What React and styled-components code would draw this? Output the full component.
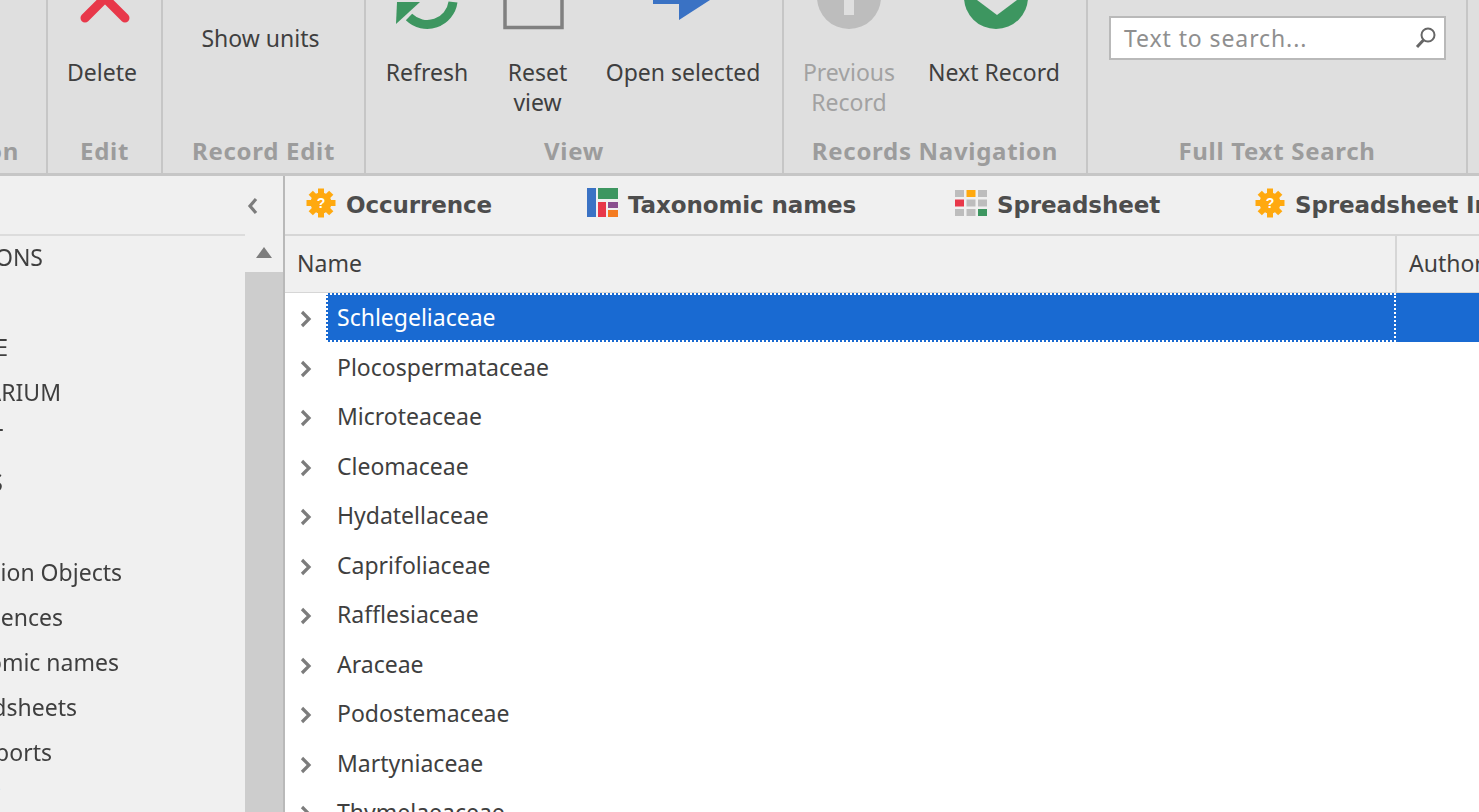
import React from "react";
import styled, { createGlobalStyle } from "styled-components";

const GlobalStyle = createGlobalStyle`
  html, body {
    margin: 0;
    height: 100%;
    overflow: hidden;
    background: #fff;
  }
`;

const Page = styled.div`
  width: 1479px;
  height: 812px;
  overflow: hidden;
  display: flex;
  flex-direction: column;
  font-family: "Noto Sans", "Liberation Sans", sans-serif;
  font-size: 23px;
  color: #3f3f3f;
  filter: blur(0.45px);
`;

const Ribbon = styled.div`
  height: 173px;
  flex: none;
  display: flex;
  background: #dfdfdf;
  border-bottom: 3px solid #c6c6c6;
`;

const Group = styled.div`
  width: ${(p) => p.$w}px;
  flex: none;
  box-sizing: border-box;
  display: flex;
  flex-direction: column;
  border-right: 2px solid #c6c6c6;
  overflow: hidden;
`;

const GroupBody = styled.div`
  height: 134px;
  display: flex;
`;

const Caption = styled.div`
  height: 36px;
  line-height: 34px;
  text-align: center;
  font-size: 24px;
  letter-spacing: 0.7px;
  font-weight: 700;
  color: #9c9c9c;
  white-space: nowrap;
`;

const ClippedCaption = styled(Caption)`
  display: flex;
  justify-content: flex-end;
  padding-right: 27px;
`;

const BarButton = styled.div`
  width: ${(p) => p.$w}px;
  flex: none;
  display: flex;
  flex-direction: column;
  align-items: center;
  text-align: center;
  line-height: 30px;
  color: ${(p) => (p.$off ? "#a2a2a2" : "#3f3f3f")};
`;

const IconSlot = styled.div`
  height: 57px;
  width: 100%;
  display: flex;
  justify-content: center;
  align-items: flex-start;
`;

const SmallButton = styled.div`
  flex: 1;
  padding: 23px 6px 0 0;
  line-height: 30px;
  text-align: center;
  white-space: nowrap;
`;

const SearchBox = styled.div`
  margin: 16px 0 0 21px;
  width: 337px;
  height: 44px;
  box-sizing: border-box;
  background: #fff;
  border: 2px solid #b9b9b9;
  display: flex;
  align-items: center;
  justify-content: space-between;
  padding: 0 5px 0 13px;
  color: #8f8f8f;
  letter-spacing: 0.9px;
`;

const Main = styled.div`
  flex: 1;
  min-height: 0;
  display: flex;
`;

const Sidebar = styled.div`
  width: 283px;
  flex: none;
  display: flex;
  background: #f0f0f0;
  border-right: 2px solid #b9b9b9;
`;

const SideColumn = styled.div`
  width: 245px;
  flex: none;
  display: flex;
  flex-direction: column;
`;

const SideHeader = styled.div`
  height: 60px;
  flex: none;
  box-sizing: border-box;
  border-bottom: 2px solid #dcdcdc;
  margin-bottom: -2px;
`;

const SideItem = styled.div`
  width: ${(p) => p.$end}px;
  height: 45px;
  flex: none;
  display: flex;
  align-items: center;
  justify-content: flex-end;
  overflow: hidden;
  white-space: nowrap;
  color: ${(p) => p.$color || "#3f3f3f"};
`;

const ScrollColumn = styled.div`
  flex: 1;
  display: flex;
  flex-direction: column;
  align-items: center;
`;

const CollapseSlot = styled.div`
  height: 60px;
  flex: none;
  width: 100%;
  display: flex;
  align-items: center;
  justify-content: flex-start;
  padding-left: 1px;
  box-sizing: border-box;
`;

const ScrollArrow = styled.div`
  height: 36px;
  flex: none;
  width: 100%;
  display: flex;
  justify-content: center;
  padding-top: 11px;
  box-sizing: border-box;
`;

const ScrollThumb = styled.div`
  flex: 1;
  width: 100%;
  background: #cdcdcd;
`;

const Content = styled.div`
  flex: 1;
  min-width: 0;
  display: flex;
  flex-direction: column;
`;

const TabBar = styled.div`
  height: 60px;
  flex: none;
  box-sizing: border-box;
  display: flex;
  align-items: center;
  padding-left: 21px;
  background: #f0f0f0;
  border-bottom: 2px solid #d6d6d6;
  white-space: nowrap;
`;

const Tab = styled.div`
  width: ${(p) => p.$w}px;
  flex: none;
  display: flex;
  align-items: center;
  gap: 10px;
  font-family: "DejaVu Sans", sans-serif;
  font-size: 23px;
  font-weight: 700;
  letter-spacing: -0.1px;
  color: #4d4d4d;

  svg {
    flex: none;
    margin-top: -5px;
  }
`;

const HeaderRow = styled.div`
  height: 56px;
  flex: none;
  display: flex;
  background: #f0f0f0;
  border-bottom: 1px solid #d6d6d6;
`;

const HeaderCell = styled.div`
  width: ${(p) => p.$w}px;
  flex: none;
  box-sizing: border-box;
  padding-left: 12px;
  line-height: 55px;
  border-right: 2px solid #d6d6d6;
  white-space: nowrap;
`;

const LastHeaderCell = styled(HeaderCell)`
  border-right: 0;
`;

const Row = styled.div`
  height: 49.5px;
  flex: none;
  display: flex;
  align-items: center;
  background: #fff;
`;

const Expander = styled.div`
  width: 41px;
  flex: none;
  display: flex;
  align-items: center;
  padding: 3px 0 0 14px;
  box-sizing: border-box;
`;

const NameCell = styled.div`
  width: 1070px;
  height: 49px;
  flex: none;
  box-sizing: border-box;
  padding-left: 11px;
  line-height: 49px;
  background: ${(p) => (p.$selected ? "#196ad2" : "transparent")};
  color: ${(p) => (p.$selected ? "#fff" : "#3f3f3f")};
  outline: ${(p) => (p.$selected ? "2px dotted #fff" : "none")};
  outline-offset: -2px;
`;

const RestCell = styled.div`
  flex: 1;
  height: 49px;
  background: ${(p) => (p.$selected ? "#196ad2" : "transparent")};
`;

const Gear = () => (
  <svg width="30" height="30" viewBox="0 0 30 30">
    {[0, 45, 90, 135, 180, 225, 270, 315].map((a) => (
      <rect key={a} x="12" y="0.5" width="6" height="8" fill="#ffa90f" transform={`rotate(${a} 15 15)`} />
    ))}
    <circle cx="15" cy="15" r="10.5" fill="#ffa90f" />
    <text x="15" y="20" textAnchor="middle" fontSize="14" fontWeight="700" fontFamily="Liberation Sans" fill="#fff">?</text>
  </svg>
);

const TaxonIcon = () => (
  <svg width="31" height="29" viewBox="0 0 31 29">
    <rect x="0" y="0" width="9" height="29" fill="#3a72c4" />
    <rect x="11" y="0" width="20" height="11" fill="#3d9660" />
    <rect x="11" y="14" width="8" height="15" fill="#e8384a" />
    <rect x="21" y="14" width="10" height="6" fill="#8a4f8f" />
    <rect x="21" y="22" width="10" height="7" fill="#f47b20" />
  </svg>
);

const gridColors = ["#bdbdbd", "#ffa90f", "#bdbdbd", "#e8384a", "#bdbdbd", "#bdbdbd", "#bdbdbd", "#bdbdbd", "#3d9660"];

const GridIcon = () => (
  <svg width="32" height="26" viewBox="0 0 32 26">
    {gridColors.map((c, i) => (
      <rect key={i} x={(i % 3) * 11.5} y={Math.floor(i / 3) * 9.5} width="9" height="7" fill={c} />
    ))}
  </svg>
);

const DeleteIcon = () => (
  <svg width="60" height="26" viewBox="0 0 60 26">
    <path d="M13 18 L33 -2 L53 18" fill="none" stroke="#e8384a" strokeWidth="9" strokeLinecap="round" />
  </svg>
);

const RefreshIcon = () => (
  <svg width="70" height="32" viewBox="0 0 70 32">
    <path d="M61 2 A26 26 0 0 1 17 17" fill="none" stroke="#3d9660" strokeWidth="9" />
    <path d="M4 24 L5 2 L28 2 Z" fill="#3d9660" />
  </svg>
);

const ResetIcon = () => (
  <svg width="70" height="32" viewBox="0 0 70 32">
    <path d="M2 -4 V27.5 H59 V-4" fill="none" stroke="#808080" strokeWidth="3.5" />
  </svg>
);

const OpenIcon = () => (
  <svg width="60" height="24" viewBox="0 0 60 24">
    <path d="M0 0 H57 L26 20 V4 H0 Z" fill="#3a72c4" />
  </svg>
);

const PrevIcon = () => (
  <svg width="66" height="32" viewBox="0 0 66 32">
    <circle cx="33" cy="-3" r="32" fill="#bdbdbd" />
    <rect x="28" y="0" width="10" height="15" fill="#dfdfdf" />
  </svg>
);

const NextIcon = () => (
  <svg width="70" height="32" viewBox="0 0 70 32">
    <circle cx="37" cy="-3" r="32" fill="#3d9660" />
    <path d="M18 0 H58 L38 15 Z" fill="#dfdfdf" />
  </svg>
);

const Loupe = () => (
  <svg width="26" height="26" viewBox="0 0 26 26">
    <circle cx="15" cy="10" r="6.5" fill="none" stroke="#666" strokeWidth="2" />
    <path d="M10.5 15 L4 22" stroke="#666" strokeWidth="3" />
  </svg>
);

const Chevron = ({ dir }) => (
  <svg width="14" height="18" viewBox="0 0 14 18">
    <path
      d={dir === "left" ? "M10 2 L4 9 L10 16" : "M3 2 L10 9 L3 16"}
      fill="none"
      stroke="#7c7c7c"
      strokeWidth="3.2"
    />
  </svg>
);

const UpArrow = () => (
  <svg width="16" height="11" viewBox="0 0 16 11">
    <path d="M8 0 L16 11 H0 Z" fill="#7d7d7d" />
  </svg>
);

const sideItems = [
  { text: "ONS", end: 43 },
  { text: "", end: 8 },
  { text: "E", end: 8 },
  { text: "ARIUM", end: 61 },
  { text: "T", end: 3 },
  { text: "S", end: 3 },
  { text: "", end: 8 },
  { text: "ion Objects", end: 122 },
  { text: "ences", end: 63 },
  { text: "omic names", end: 119 },
  { text: "dsheets", end: 77 },
  { text: "ports", end: 52 },
  { text: "i", end: 2, color: "#8ccbf0" },
];

const families = [
  "Schlegeliaceae",
  "Plocospermataceae",
  "Microteaceae",
  "Cleomaceae",
  "Hydatellaceae",
  "Caprifoliaceae",
  "Rafflesiaceae",
  "Araceae",
  "Podostemaceae",
  "Martyniaceae",
  "Thymelaeaceae",
];

function App() {
  return (
    <Page>
      <GlobalStyle />
      <Ribbon>
        <Group $w={48}>
          <GroupBody />
          <ClippedCaption>Selection</ClippedCaption>
        </Group>
        <Group $w={115}>
          <GroupBody>
            <BarButton $w={108}>
              <IconSlot><DeleteIcon /></IconSlot>
              Delete
            </BarButton>
          </GroupBody>
          <Caption>Edit</Caption>
        </Group>
        <Group $w={203}>
          <GroupBody>
            <SmallButton>Show units</SmallButton>
          </GroupBody>
          <Caption>Record Edit</Caption>
        </Group>
        <Group $w={418}>
          <GroupBody>
            <BarButton $w={122}>
              <IconSlot><RefreshIcon /></IconSlot>
              Refresh
            </BarButton>
            <BarButton $w={99}>
              <IconSlot><ResetIcon /></IconSlot>
              Reset view
            </BarButton>
            <BarButton $w={192}>
              <IconSlot><OpenIcon /></IconSlot>
              Open selected
            </BarButton>
          </GroupBody>
          <Caption>View</Caption>
        </Group>
        <Group $w={304}>
          <GroupBody>
            <BarButton $w={130} $off>
              <IconSlot><PrevIcon /></IconSlot>
              Previous Record
            </BarButton>
            <BarButton $w={160}>
              <IconSlot><NextIcon /></IconSlot>
              Next Record
            </BarButton>
          </GroupBody>
          <Caption>Records Navigation</Caption>
        </Group>
        <Group $w={380}>
          <GroupBody>
            <SearchBox>
              Text to search...
              <Loupe />
            </SearchBox>
          </GroupBody>
          <Caption>Full Text Search</Caption>
        </Group>
      </Ribbon>
      <Main>
        <Sidebar>
          <SideColumn>
            <SideHeader />
            {sideItems.map((item, i) => (
              <SideItem key={i} $end={item.end} $color={item.color}>
                {item.text}
              </SideItem>
            ))}
          </SideColumn>
          <ScrollColumn>
            <CollapseSlot><Chevron dir="left" /></CollapseSlot>
            <ScrollArrow><UpArrow /></ScrollArrow>
            <ScrollThumb />
          </ScrollColumn>
        </Sidebar>
        <Content>
          <TabBar>
            <Tab $w={281}><Gear />Occurrence</Tab>
            <Tab $w={368}><TaxonIcon />Taxonomic names</Tab>
            <Tab $w={300}><GridIcon />Spreadsheet</Tab>
            <Tab $w={300}><Gear />Spreadsheet Imports</Tab>
          </TabBar>
          <HeaderRow>
            <HeaderCell $w={1112}>Name</HeaderCell>
            <LastHeaderCell $w={82}>Author</LastHeaderCell>
          </HeaderRow>
          {families.map((name, i) => (
            <Row key={name}>
              <Expander><Chevron dir="right" /></Expander>
              <NameCell $selected={i === 0}>{name}</NameCell>
              <RestCell $selected={i === 0} />
            </Row>
          ))}
        </Content>
      </Main>
    </Page>
  );
}

export default App;
